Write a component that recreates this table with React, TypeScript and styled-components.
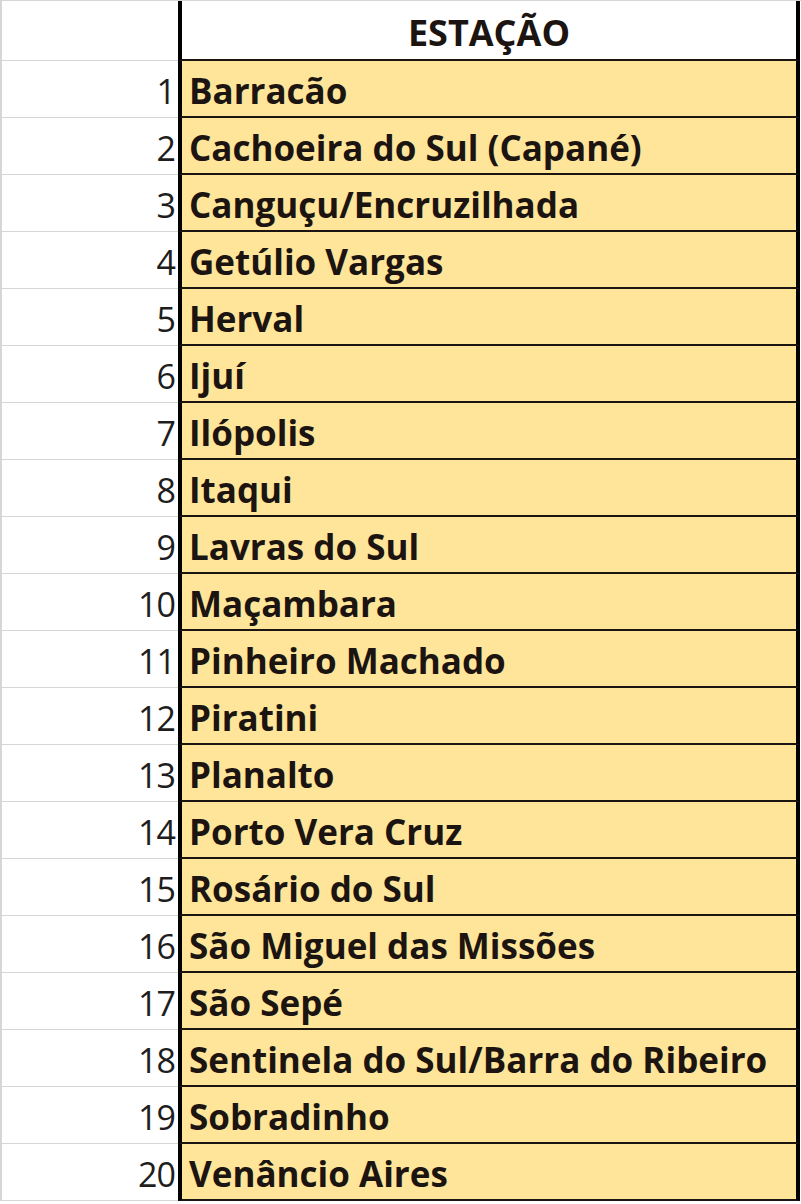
import styled, { createGlobalStyle } from "styled-components";

const estacoes = [
    "Barracão",
    "Cachoeira do Sul (Capané)",
    "Canguçu/Encruzilhada",
    "Getúlio Vargas",
    "Herval",
    "Ijuí",
    "Ilópolis",
    "Itaqui",
    "Lavras do Sul",
    "Maçambara",
    "Pinheiro Machado",
    "Piratini",
    "Planalto",
    "Porto Vera Cruz",
    "Rosário do Sul",
    "São Miguel das Missões",
    "São Sepé",
    "Sentinela do Sul/Barra do Ribeiro",
    "Sobradinho",
    "Venâncio Aires",
];

const fill = "#fee599";
const grid = "#d6d6d6";
const ink = "#1b1410";

const GlobalStyle = createGlobalStyle`
body{
    margin: 0;
    background: #ffffff;
}
`;

const Sheet = styled.div`
    width: 801px;
    height: 1204px;
    border-top: 1px solid ${grid};
    box-sizing: border-box;
    font-family: "Open Sans", Lato, "Liberation Sans", sans-serif;
    background: #ffffff;
    overflow: hidden;
`;

const Row = styled.div<{ head?: boolean }>`
    display: grid;
    grid-template-columns: 178px 622px;
    height: ${({ head }) => (head ? 60 : 57)}px;
`;

const NumCell = styled.div`
    border-left: 2px solid ${grid};
    border-bottom: 1px solid ${grid};
    display: flex;
    align-items: center;
    justify-content: flex-end;
    padding: 4px 3px 0 0;
    font-size: 34px;
    letter-spacing: -1px;
    color: #1e1e1e;
`;

const NameCell = styled.div<{ head?: boolean }>`
    border-left: 4px solid #000;
    border-right: 4px solid #000;
    border-bottom: 2px solid ${ink};
    background: ${({ head }) => (head ? "#ffffff" : fill)};
    display: flex;
    align-items: center;
    justify-content: ${({ head }) => (head ? "center" : "flex-start")};
    padding: 4px 0 0 ${({ head }) => (head ? 0 : 7)}px;
    font-size: ${({ head }) => (head ? 36 : 35)}px;
    font-weight: 700;
    color: ${ink};
    white-space: nowrap;
`;

export default function App() {
    return (
        <>
            <GlobalStyle />
            <Sheet>
                <Row head>
                    <NumCell />
                    <NameCell head>ESTAÇÃO</NameCell>
                </Row>
                {estacoes.map((nome, i) => (
                    <Row key={nome}>
                        <NumCell>{i + 1}</NumCell>
                        <NameCell>{nome}</NameCell>
                    </Row>
                ))}
            </Sheet>
        </>
    );
}
